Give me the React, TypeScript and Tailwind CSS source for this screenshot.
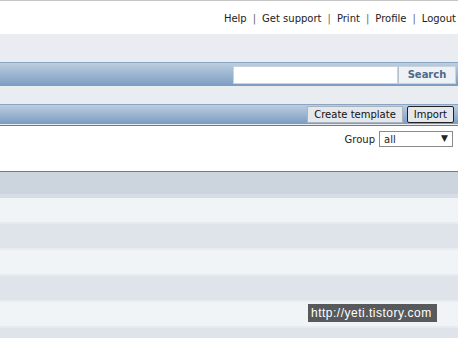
import React from "react";

const font = { fontFamily: '"DejaVu Sans", Verdana, sans-serif' };

export default function App() {
  const rows = [
    "bg-[#f0f4f7] border-b-2 border-[#e6ebf0]",
    "bg-[#dfe4ea] border-b-2 border-[#e9edf1]",
    "bg-[#f0f4f7] border-b-2 border-[#e6ebf0]",
    "bg-[#dfe4ea] border-b-2 border-[#e9edf1]",
    "bg-[#f0f4f7] border-b-2 border-[#e6ebf0]",
    "bg-[#dfe4ea] border-b-2 border-[#e9edf1]",
  ];
  return (
    <div className="relative w-[458px] h-[338px] overflow-hidden bg-white text-[10px] text-[#222]" style={font}>
      <div className="h-px bg-[#c4c4c4]" />
      <div className="h-[33px] flex items-center justify-end pr-[2px] pt-[2px]">
        <span>Help</span>
        <span className="px-[6px] text-[#666]">|</span>
        <span>Get support</span>
        <span className="px-[6px] text-[#666]">|</span>
        <span>Print</span>
        <span className="px-[6px] text-[#666]">|</span>
        <span>Profile</span>
        <span className="px-[6px] text-[#666]">|</span>
        <span>Logout</span>
      </div>
      <div className="h-[28px] bg-[#e9ecf0]" />
      <div className="h-[24px] border-t border-[#8aa5c3] bg-gradient-to-b from-[#bccde0] to-[#7b9dc1] flex items-center justify-end pr-[2px]">
        <div className="h-[18px] w-[165px] bg-white border border-[#c9d3de]" />
        <div className="h-[18px] w-[58px] bg-[#eef1f5] border border-[#c9d3de] border-l-[#b6c2cf] flex items-center justify-center font-bold text-[#4d6a88]">
          Search
        </div>
      </div>
      <div className="h-[18px] bg-[#e9ecf0]" />
      <div className="h-[20px] border-t border-[#8aa5c3] bg-gradient-to-b from-[#bccde0] to-[#7b9dc1] flex items-center justify-end pr-[4px] gap-[4px]">
        <div className="h-[17px] px-[6px] bg-[#e4e7eb] border border-[#a9b3bd] flex items-center text-[#111]">
          Create template
        </div>
        <div className="h-[17px] px-[6px] bg-[#e4e7eb] border border-[#222] rounded-[2px] flex items-center text-[#111]">
          Import
        </div>
      </div>
      <div className="h-px bg-[#e8eef4]" />
      <div className="h-px bg-[#5d7f9f]" />
      <div className="h-[45px] flex justify-end items-start pt-[5px] pr-[5px]">
        <div className="flex items-center gap-[4px]">
          <span>Group</span>
          <div className="h-[16px] w-[74px] border border-[#8a8a8a] bg-white flex items-center justify-between px-[4px]">
            <span>all</span>
            <span className="text-[9px]">▼</span>
          </div>
        </div>
      </div>
      <div className="h-px bg-[#5d7f9f]" />
      <div className="h-[26px] bg-[#ccd5de] border-b-[4px] border-[#d6dde5]" />
      {rows.map((c, i) => (
        <div key={i} className={"h-[26px] " + c} />
      ))}
      <div
        className="absolute left-[308px] top-[304px] w-[129px] h-[18px] bg-[#58595b] text-white flex items-center pl-[3px] text-[12px] whitespace-nowrap"
        style={{ fontFamily: '"Liberation Sans", Arial, sans-serif', letterSpacing: "0.5px" }}
      >
        http://yeti.tistory.com
      </div>
    </div>
  );
}
